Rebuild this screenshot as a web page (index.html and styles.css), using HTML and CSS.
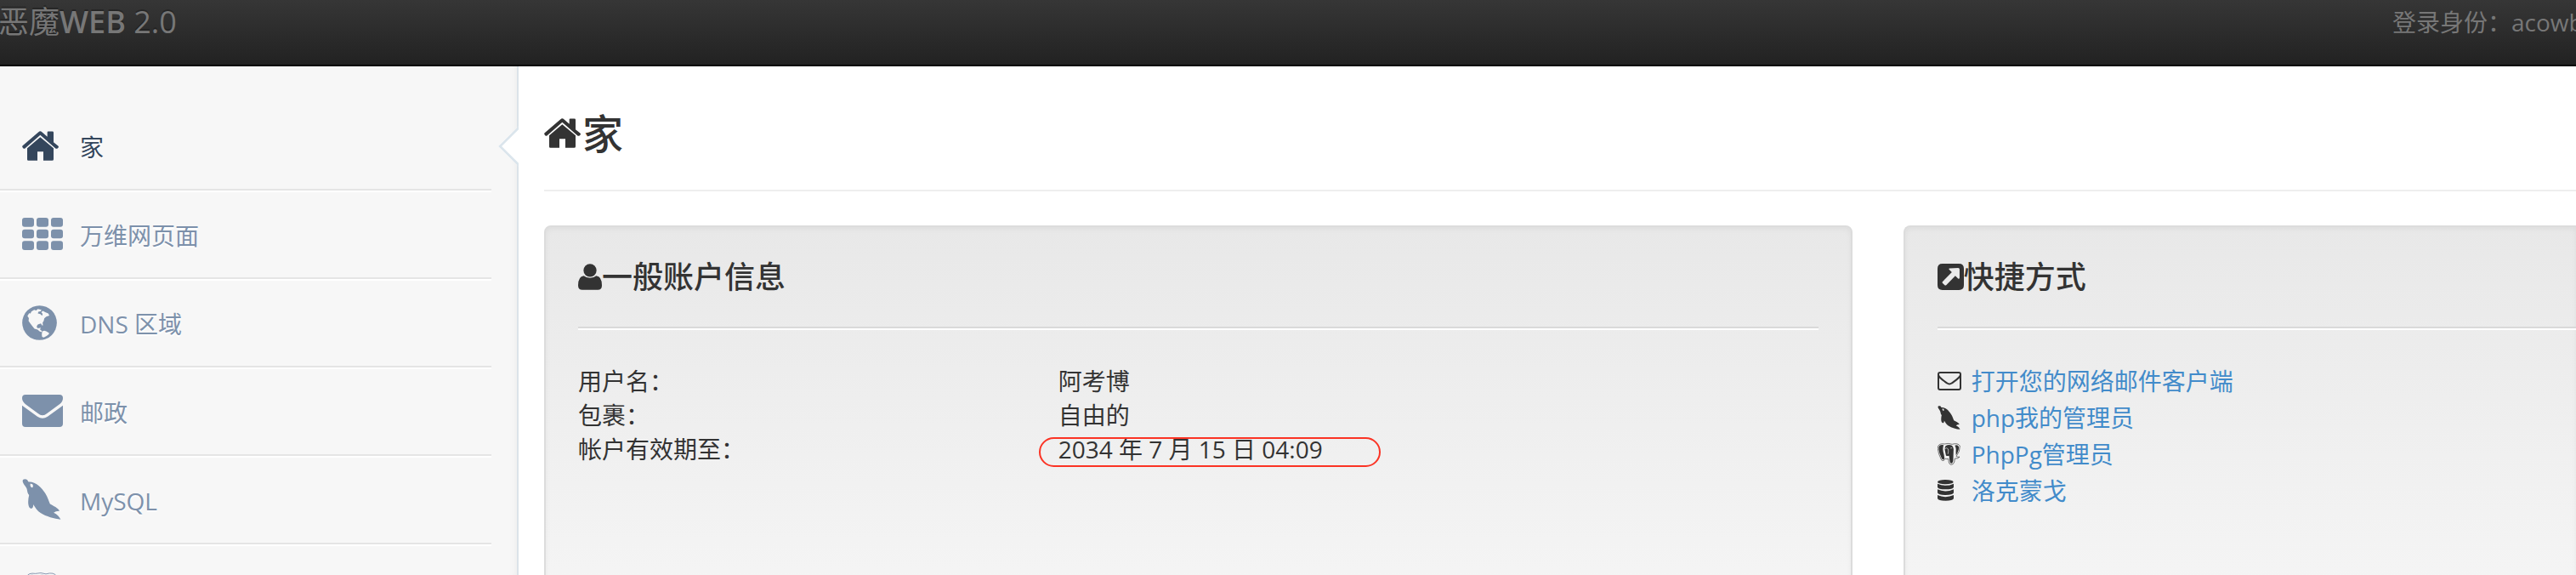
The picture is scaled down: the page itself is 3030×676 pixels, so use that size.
FILE: index.html
```html
<!DOCTYPE html>
<html lang="zh-CN">
<head>
<meta charset="UTF-8">
<meta name="viewport" content="width=device-width, initial-scale=1.0">
<title>恶魔WEB 2.0</title>
<link rel="stylesheet" href="styles.css">
</head>
<body>
<!-- shared icons -->
<svg class="sprite" aria-hidden="true">
    <symbol id="home" viewBox="0 0 129 104">
        <path d="M18 60V100q0 4 4 4H54V72H75V104H106q5 0 5-5V60L64 21z"/>
        <path d="M2 51L58 3q6-5 12 0L89 20V4q0-3 3-3h15q4 0 4 4V39l16 13q4 4 0 7l-2 2q-4 2-7 0L64 14 11 60q-4 3-7 0l-2-2q-3-4 0-7z"/>
    </symbol>
    <symbol id="dolphin" viewBox="79 357 138 146">
        <path fill-rule="evenodd" d="M80 364C80 357 90 356 96 360L101 368C126 366 147 387 161 409C170 424 174 438 178 447C190 454 207 461 212 472C204 471 197 474 191 478C203 483 212 493 216 502C194 500 164 492 144 479C132 471 125 459 118 448C119 456 115 464 110 463C98 461 98 435 103 415C97 410 97 401 95 393C92 383 80 375 80 364zM108 374C105 380 110 389 115 388C118 386 118 379 115 376z"/>
    </symbol>
    <symbol id="elephant" viewBox="417 837 82 79">
        <path class="fill" d="M423 847Q430 841 439 844Q433 856 440 878L442 892Q437 900 432 892Q423 874 421 858Q421 850 423 847z"/>
        <path class="fill" d="M446 847Q456 840 468 845Q476 852 474 866L473 898Q472 909 466 909Q461 908 461 902L458 882Q449 884 447 880L443 860Q443 850 446 847z"/>
        <path class="fill" d="M479 845Q489 841 493 850Q494 864 483 880Q482 868 483 858Q482 849 479 845z"/>
        <path class="line" d="M419 848Q424 837 442 840Q456 836 469 841Q490 835 497 847Q498 866 484 884Q490 888 496 886Q491 893 479 892L477 904Q474 914 465 914Q458 912 457 903L456 893Q449 895 445 892Q438 904 431 897Q419 874 418 857z"/>
        <path class="light" d="M443 857Q450 851 455 858Q457 867 454 876M453 888L458 886M463 855L469 854M475 850Q481 857 478 868Q476 878 480 884"/>
    </symbol>
</svg>

<header class="topbar">
    <a class="brand" href="#">恶魔<b>WEB</b> 2.0</a>
    <div class="login">登录身份：acowb</div>
</header>

<div class="page">
    <nav class="sidebar">
        <ul>
            <li class="active"><a href="#"><span class="icon"><svg class="i-home"><use href="#home"/></svg></span>家</a></li>
            <li><a href="#"><span class="icon">
                <svg class="i-wide" viewBox="0 0 144 114">
                    <rect width="42" height="32" rx="9"/><rect x="51" width="42" height="32" rx="9"/><rect x="102" width="42" height="32" rx="9"/>
                    <rect y="41" width="42" height="32" rx="9"/><rect x="51" y="41" width="42" height="32" rx="9"/><rect x="102" y="41" width="42" height="32" rx="9"/>
                    <rect y="82" width="42" height="32" rx="9"/><rect x="51" y="82" width="42" height="32" rx="9"/><rect x="102" y="82" width="42" height="32" rx="9"/>
                </svg></span>万维网页面</a></li>
            <li><a href="#"><span class="icon">
                <svg class="i-globe" viewBox="78 357 124 124">
                    <circle cx="140" cy="419" r="61.5"/>
                    <path class="land" d="M97 395L103 385L108 386L111 379L121 373L128 375L134 370L147 373L144 378L136 380L134 386L143 388L149 394L151 387L146 381L152 377L160 381L171 386L175 393L164 397L157 403L155 412L151 418L152 429L148 427L145 421L134 425L130 431L132 438L139 438L144 436L142 443L148 448L149 452L141 450L133 443L122 440L114 430L106 420L101 412L102 402z"/>
                    <path class="land" d="M150 449L157 447L164 449L174 455L173 460L165 466L155 471L149 469L148 459z"/>
                </svg></span>DNS 区域</a></li>
            <li><a href="#"><span class="icon">
                <svg class="i-wide" viewBox="0 0 144 114">
                    <path d="M12 0H132Q144 0 144 12Q144 25 132 34L88 66Q72 80 56 66L12 34Q0 24 0 12Q0 0 12 0z"/>
                    <path d="M0 38L54 77Q72 89 90 77L144 38V102Q144 114 132 114H12Q0 114 0 102z"/>
                </svg></span>邮政</a></li>
            <li><a href="#"><span class="icon"><svg class="i-dolphin"><use href="#dolphin"/></svg></span>MySQL</a></li>
            <li><a href="#" aria-label="PostgreSQL"><span class="icon"><svg class="i-elephant"><use href="#elephant"/></svg></span></a></li>
        </ul>
    </nav>

    <main class="content">
        <h1><svg class="i-home"><use href="#home"/></svg>家</h1>

        <div class="cards">
            <section class="card">
                <h2><svg class="i-user" viewBox="0 0 84 92">
                    <circle cx="42" cy="23" r="23"/>
                    <path d="M20 42Q42 58 64 42Q84 44 84 76Q84 92 69 92H15Q0 92 0 76Q0 44 20 42z"/>
                </svg>一般账户信息</h2>
                <dl class="account">
                    <dt>用户名：</dt><dd>阿考博</dd>
                    <dt>包裹：</dt><dd>自由的</dd>
                    <dt>帐户有效期至：</dt><dd class="marked">2034 年 7 月 15 日 04:09</dd>
                </dl>
            </section>

            <section class="card card-last">
                <h2><svg class="i-share" viewBox="0 0 92 92">
                    <path fill-rule="evenodd" d="M17 0H75Q92 0 92 17V75Q92 92 75 92H17Q0 92 0 75V17Q0 0 17 0zM42 16Q38 17 41 21L50 30L18 62Q15 65 18 68L25 75Q28 77 31 74L62 42L71 51Q76 55 77 49V20Q77 15 72 15z"/>
                </svg>快捷方式</h2>
                <ul class="links">
                    <li><svg class="i-mail" viewBox="0 0 84 66">
                        <rect class="stroke" x="3" y="3" width="78" height="60" rx="6"/>
                        <path class="stroke" d="M3 13Q8 22 18 29L33 40Q42 47 51 40L66 29Q76 22 81 13"/>
                    </svg><a href="#">打开您的网络邮件客户端</a></li>
                    <li><svg class="i-small"><use href="#dolphin"/></svg><a href="#">php我的管理员</a></li>
                    <li><svg class="i-small"><use href="#elephant"/></svg><a href="#">PhpPg管理员</a></li>
                    <li><svg class="i-db" viewBox="0 0 57 75">
                        <ellipse cx="28" cy="8" rx="28" ry="8"/>
                        <path d="M0 14Q28 27 57 14V26Q54 34 28 34Q3 34 0 26z"/>
                        <path d="M0 34Q28 47 57 34V46Q54 54 28 54Q3 54 0 46z"/>
                        <path d="M0 54Q28 67 57 54V66Q54 74 28 74Q3 74 0 66z"/>
                    </svg><a href="#">洛克蒙戈</a></li>
                </ul>
            </section>
        </div>
    </main>
</div>
</body>
</html>
```

FILE: styles.css
```css
*, *::after {
    box-sizing: border-box;
}
body {
    margin: 0;
    height: 100vh;
    overflow: hidden;
    display: flex;
    flex-direction: column;
    font-family: "Open Sans", "Noto Sans CJK SC", sans-serif;
    font-size: 28px;
    line-height: 40px;
    color: #333;
    background: #fff;
}
a {
    color: #428bca;
    text-decoration: none;
}
ul, dl, dd {
    margin: 0;
    padding: 0;
    list-style: none;
}
svg {
    fill: currentColor;
    flex: none;
}
.sprite {
    position: absolute;
    width: 0;
    height: 0;
}

/* top bar */
.topbar {
    flex: none;
    display: flex;
    justify-content: space-between;
    height: 78px;
    padding-top: 6px;
    border-bottom: 2px solid #040404;
    background: linear-gradient(#363636, #222);
    color: #777;
    overflow: hidden;
    white-space: nowrap;
}
.brand {
    margin-left: -2px;
    font-size: 36px;
    color: #777;
    text-shadow: 0 -2px 0 rgba(0, 0, 0, 0.25);
}
.brand b {
    font-weight: 600;
}
.login {
    flex: 0 0 216px;
    min-width: 0;
}

/* sidebar */
.page {
    flex: 1;
    min-height: 0;
    display: flex;
}
.sidebar {
    flex: 0 0 610px;
    padding: 42px 30px 0 0;
    border-right: 2px solid #dbe3e9;
    background: #f7f7f7;
    box-shadow: inset -8px 0 8px -6px rgba(0, 0, 0, 0.04);
}
.sidebar li {
    position: relative;
    border-bottom: 2px solid #e5e5e5;
    box-shadow: 0 2px 0 #fff;
}
.sidebar a {
    display: flex;
    align-items: center;
    height: 102px;
    padding: 4px 0 0 26px;
    color: #7d91ab;
    text-shadow: 0 2px 0 #fff;
}
.sidebar .active a {
    color: #34465c;
}
.sidebar .active::after {
    content: "";
    position: absolute;
    right: -49px;
    top: 35px;
    width: 34px;
    height: 34px;
    border: solid #dbe5ec;
    border-width: 0 0 3px 3px;
    background: #fff;
    transform: rotate(45deg);
    clip-path: polygon(0 0, 100% 100%, 0 100%);
}
.icon {
    display: flex;
    width: 68px;
    padding-bottom: 4px;
}
.land {
    fill: #f7f7f7;
}
.i-home {
    width: 43px;
    height: 35px;
}
.i-wide {
    width: 48px;
    height: 38px;
}
.i-globe {
    width: 41px;
    height: 41px;
}
.i-dolphin {
    width: 46px;
    height: 48px;
}
.i-elephant {
    width: 46px;
    height: 36px;
}
.fill {
    fill: currentColor;
}
.line {
    fill: none;
    stroke: currentColor;
    stroke-width: 2;
}
.light {
    fill: none;
    stroke: #eee;
    stroke-width: 2;
}

/* content */
.content {
    flex: 1;
    min-width: 0;
    padding-left: 30px;
}
h1 {
    display: flex;
    align-items: center;
    gap: 2px;
    height: 147px;
    margin: 0 0 40px;
    padding-top: 12px;
    border-bottom: 2px solid #eee;
    font-size: 48px;
    font-weight: 500;
}
.cards {
    display: grid;
    grid-template-columns: 35fr 18fr;
    gap: 60px;
}
.card {
    min-height: 440px;
    padding: 38px;
    border: 2px solid #dcdcdc;
    border-radius: 8px;
    background: linear-gradient(#e8e8e8, #f5f5f5);
    box-shadow: inset 0 2px 6px rgba(0, 0, 0, 0.05);
}
/* runs on past the right edge of the window */
.card-last {
    padding-right: 0;
    border-right: 0;
    border-radius: 8px 0 0 8px;
}
h2 {
    display: flex;
    align-items: center;
    height: 81px;
    margin: 0 0 42px;
    padding-bottom: 38px;
    border-bottom: 2px solid #d9d9d9;
    box-shadow: 0 2px 0 #fff;
    font-size: 36px;
    font-weight: 500;
}
.i-user {
    width: 28px;
    height: 31px;
}
.i-share {
    width: 31px;
    height: 31px;
}
.account {
    display: grid;
    grid-template-columns: 12fr 19fr;
}
.marked {
    position: relative;
}
.marked::after {
    content: "";
    position: absolute;
    left: -23px;
    top: 6px;
    width: 402px;
    height: 35px;
    border: 2px solid #fb3324;
    border-radius: 18px;
}
.links {
    margin-top: -2px;
}
.links li {
    display: grid;
    grid-template-columns: 28px 1fr;
    gap: 12px;
    align-items: center;
    height: 43px;
}
.stroke {
    fill: none;
    stroke: currentColor;
    stroke-width: 6;
}
.i-mail {
    width: 28px;
    height: 22px;
}
.i-small {
    width: 27px;
    height: 28px;
}
.i-db {
    width: 19px;
    height: 25px;
}
```
